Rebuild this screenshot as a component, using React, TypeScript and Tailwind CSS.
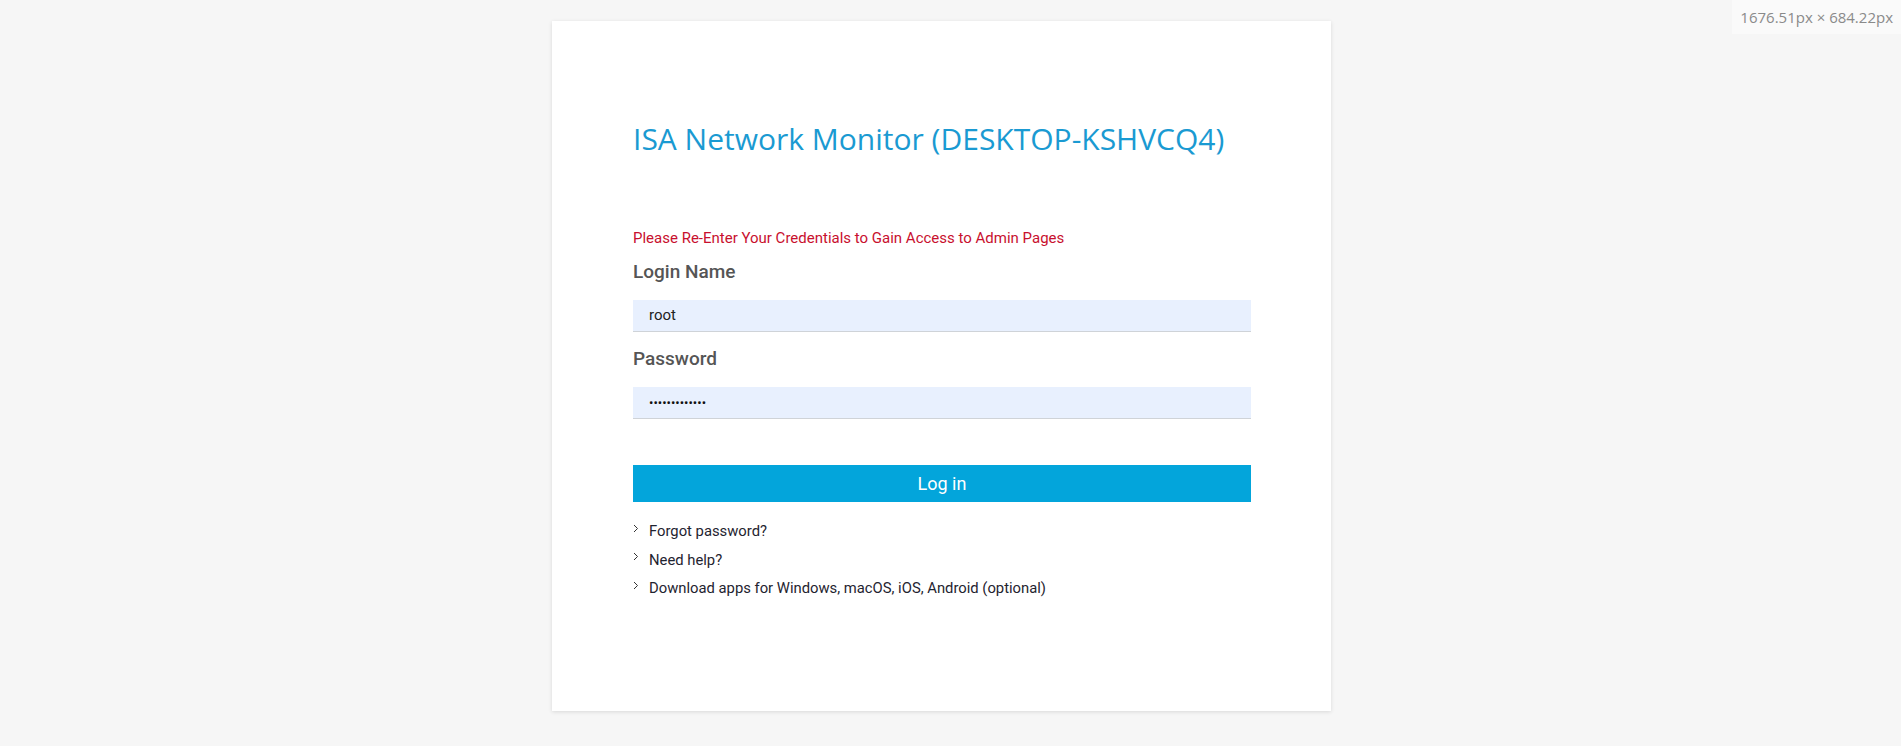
import React from "react";

const links = [
  "Forgot password?",
  "Need help?",
  "Download apps for Windows, macOS, iOS, Android (optional)",
];

const Chevron = () => (
  <svg width="6" height="9" viewBox="0 0 6 9" className="mt-[-6px] shrink-0">
    <polyline points="1,1 4.5,4.5 1,8" fill="none" stroke="#333" strokeWidth="1" />
  </svg>
);

const App = () => {
  return (
    <div className="relative min-h-[746px] w-full bg-[#f6f6f6] pt-[21px] pl-[552px] font-['Roboto',sans-serif]">
      <div className="absolute right-0 top-0 bg-[#fafafa] px-[8px] py-[6px] font-['Open_Sans',sans-serif] text-[15px] leading-[22px] text-[#8a8a8a]">
        1676.51px × 684.22px
      </div>

      <div className="h-[690px] w-[779px] bg-white pl-[81px] pr-[80px] pt-[98px] shadow-[0_1px_4px_rgba(0,0,0,0.12)]">
        <h1 className="font-['Open_Sans',sans-serif] text-[30px] leading-[40px] text-[#1a9ad2]">
          ISA Network Monitor (DESKTOP-KSHVCQ4)
        </h1>

        <p className="mt-[69px] text-[15px] leading-[20px] text-[#c8102e]">
          Please Re-Enter Your Credentials to Gain Access to Admin Pages
        </p>

        <label className="mt-[10px] block text-[19px] font-medium leading-[28px] text-[#555]">Login Name</label>
        <div className="mt-[14px] h-[32px] border-b border-[#cfd3d8] bg-[#e8f0fe] pl-[16px] text-[15px] leading-[31px] text-[#222]">
          root
        </div>

        <label className="mt-[13px] block text-[19px] font-medium leading-[28px] text-[#555]">Password</label>
        <div className="mt-[14px] flex h-[32px] items-center border-b border-[#cfd3d8] bg-[#e8f0fe] pl-[16px]">
          <input
            type="password"
            readOnly
            value="sssssssssssss"
            className="w-full bg-transparent text-[13px] text-[#111] outline-none"
          />
        </div>

        <button className="mt-[46px] h-[37px] w-full bg-[#03a5db] text-[18px] text-white">Log in</button>

        <ul className="mt-[15px] flex flex-col">
          {links.map((l) => (
            <li key={l} className="flex h-[28.5px] items-center gap-[10px] text-[14.8px] text-[#1f2430]">
              <Chevron />
              <span>{l}</span>
            </li>
          ))}
        </ul>
      </div>
    </div>
  );
};

export default App;
